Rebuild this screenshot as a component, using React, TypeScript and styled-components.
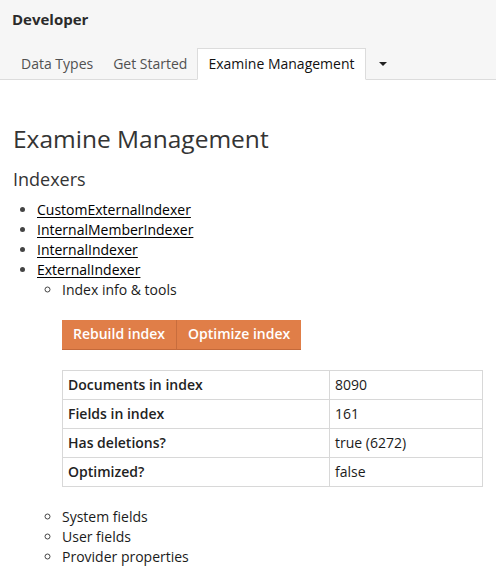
import React from "react";
import styled, { createGlobalStyle } from "styled-components";

const Global = createGlobalStyle`
  html, body { margin: 0; padding: 0; background: #fff; }
  body {
    font-family: "Open Sans", "Noto Sans", sans-serif;
    font-size: 14px;
    line-height: 20px;
    color: #1b1b1b;
  }
  * { box-sizing: border-box; }
`;

const Header = styled.header`
  background: #f6f6f6;
  border-bottom: 1px solid #dcdcdc;
  height: 80px;
  display: flex;
  flex-direction: column;
  justify-content: space-between;
`;

const Title = styled.div`
  padding: 9px 12px 0;
  font-size: 15px;
  font-weight: 700;
  line-height: 20px;
  color: #2b2b2b;
`;

const Tabs = styled.ul`
  list-style: none;
  margin: 0 0 -1px;
  padding: 0 0 0 11px;
  display: flex;
  align-items: flex-end;
`;

const Tab = styled.li<{ $active?: boolean }>`
  padding: 5px 10px;
  height: 32px;
  line-height: 20px;
  font-size: 14px;
  color: ${(p) => (p.$active ? "#111" : "#515151")};
  background: ${(p) => (p.$active ? "#fff" : "transparent")};
  border: 1px solid ${(p) => (p.$active ? "#dcdcdc" : "transparent")};
  border-bottom-color: ${(p) => (p.$active ? "#fff" : "transparent")};
  border-left-width: ${(p) => (p.$active ? "1px" : "0")};
  border-right-width: ${(p) => (p.$active ? "1px" : "0")};
  white-space: nowrap;
`;

const DropTab = styled.li`
  height: 32px;
  padding: 0 13px;
  display: flex;
  align-items: center;
`;

const Caret = styled.span`
  display: block;
  width: 0;
  height: 0;
  margin-top: -1px;
  border-top: 4px solid #222;
  border-left: 4px solid transparent;
  border-right: 4px solid transparent;
`;

const Content = styled.main`
  padding: 0 13px 20px;
`;

const H1 = styled.h1`
  margin: 44px 0 0;
  font-size: 24.5px;
  line-height: 30px;
  font-weight: 400;
  color: #343434;
`;

const H3 = styled.h3`
  margin: 14px 0 0;
  font-size: 18px;
  line-height: 22px;
  font-weight: 400;
  color: #343434;
`;

const List = styled.ul`
  margin: 10px 0 0;
  padding-left: 24px;
  list-style: disc;
`;

const SubList = styled.ul`
  margin: 0;
  padding-left: 25px;
  list-style: circle;
`;

const Item = styled.li`
  line-height: 20px;
  &::marker { color: #444; }
`;

const Link = styled.a`
  color: #000;
  text-decoration: underline;
  text-underline-offset: 2px;
`;

const Actions = styled.div`
  display: flex;
  margin-top: 20px;
`;

const ActionButton = styled.button<{ $first?: boolean }>`
  font-family: inherit;
  font-size: 14px;
  font-weight: 600;
  line-height: 20px;
  color: #fff;
  background: #e07e48;
  border: none;
  border-bottom: 1px solid #c4693a;
  border-left: ${(p) => (p.$first ? "none" : "1px solid #c86d3d")};
  padding: 4px 11px 5px;
  margin: 0;
  cursor: pointer;
`;

const InfoTable = styled.table`
  margin: 20px 0 20px;
  width: 100%;
  border-collapse: collapse;
  border: 1px solid #d8d8d8;
`;

const Cell = styled.td<{ $label?: boolean }>`
  border: 1px solid #d8d8d8;
  padding: 4px 5px;
  line-height: 20px;
  font-weight: ${(p) => (p.$label ? 600 : 400)};
  color: ${(p) => (p.$label ? "#222" : "#1b1b1b")};
  width: ${(p) => (p.$label ? "267px" : "auto")};
`;

const rows: [string, string][] = [
  ["Documents in index", "8090"],
  ["Fields in index", "161"],
  ["Has deletions?", "true (6272)"],
  ["Optimized?", "false"],
];

export default function App() {
  return (
    <>
      <Global />
      <Header>
        <Title>Developer</Title>
        <Tabs>
          <Tab>Data Types</Tab>
          <Tab>Get Started</Tab>
          <Tab $active>Examine Management</Tab>
          <DropTab>
            <Caret />
          </DropTab>
        </Tabs>
      </Header>
      <Content>
        <H1>Examine Management</H1>
        <H3>Indexers</H3>
        <List>
          <Item>
            <Link href="#">CustomExternalIndexer</Link>
          </Item>
          <Item>
            <Link href="#">InternalMemberIndexer</Link>
          </Item>
          <Item>
            <Link href="#">InternalIndexer</Link>
          </Item>
          <Item>
            <Link href="#">ExternalIndexer</Link>
            <SubList>
              <Item>
                Index info &amp; tools
                <Actions>
                  <ActionButton $first>Rebuild index</ActionButton>
                  <ActionButton>Optimize index</ActionButton>
                </Actions>
                <InfoTable>
                  <tbody>
                    {rows.map(([k, v]) => (
                      <tr key={k}>
                        <Cell $label>{k}</Cell>
                        <Cell>{v}</Cell>
                      </tr>
                    ))}
                  </tbody>
                </InfoTable>
              </Item>
              <Item>System fields</Item>
              <Item>User fields</Item>
              <Item>Provider properties</Item>
            </SubList>
          </Item>
        </List>
      </Content>
    </>
  );
}
